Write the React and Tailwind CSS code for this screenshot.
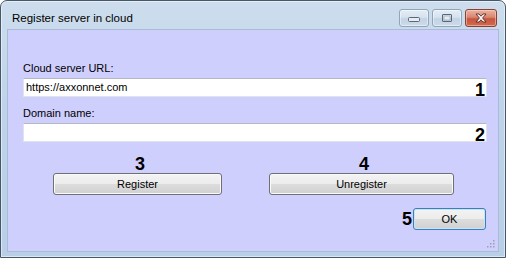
import React from "react";

function CaptionButton({ kind }) {
  if (kind === "close") {
    return (
      <div className="flex h-[18px] w-[32px] items-center justify-center rounded-[3px] border border-[#8a3f33] bg-[linear-gradient(to_bottom,#eab3a3_0%,#d98770_45%,#c8553d_55%,#cf6b4f_100%)] shadow-[inset_0_0_0_1px_rgba(255,220,210,0.5)]">
        <svg width="14" height="10" viewBox="0 0 14 10">
          <path
            d="M2 1 L5 1 L7 3.2 L9 1 L12 1 L8.6 5 L12 9 L9 9 L7 6.8 L5 9 L2 9 L5.4 5 Z"
            fill="#f4f4f4"
            stroke="#5b2a22"
            strokeWidth="0.9"
            strokeLinejoin="round"
          />
        </svg>
      </div>
    );
  }
  return (
    <div className="flex h-[18px] w-[30px] items-center justify-center rounded-[3px] border border-[#91a5ba] bg-[linear-gradient(to_bottom,#e4edf6_0%,#d6e2ee_45%,#c2d3e5_55%,#ccdbea_100%)] shadow-[inset_0_0_0_1px_rgba(255,255,255,0.45)]">
      {kind === "min" ? (
        <svg width="14" height="10" viewBox="0 0 14 10">
          <rect x="1.5" y="4.5" width="11" height="4" rx="1" fill="#e8ecf0" stroke="#56687a" />
        </svg>
      ) : (
        <svg width="14" height="10" viewBox="0 0 14 10">
          <rect x="2.5" y="1.5" width="9" height="7" rx="0.5" fill="none" stroke="#56687a" />
          <rect x="4" y="3" width="6" height="4" fill="#e8ecf0" stroke="#8a9bad" strokeWidth="0.6" />
        </svg>
      )}
    </div>
  );
}

function Field({ label, value, num, labelGap }) {
  return (
    <div className={`flex flex-col ${labelGap}`}>
      <span className="h-[13px] text-[11px] leading-[13px] text-black">{label}</span>
      <div className="relative mt-[3px] mr-[11px] flex h-[19px] items-center border border-[#dfe3ea] border-t-[#b4b8c0] bg-white px-[2px] text-[11px] leading-[13px] text-black">
        {value}
        <span className="absolute top-[3px] right-[1px] text-[18px] font-bold leading-[17px] text-black">
          {num}
        </span>
      </div>
    </div>
  );
}

function WinButton({ label, width, focused }) {
  return (
    <div
      className={`flex h-[22px] ${width} items-center justify-center rounded-[3px] border text-[11px] leading-[13px] text-black bg-[linear-gradient(to_bottom,#f3f3f3_0%,#ececec_50%,#dddddd_50%,#d0d0d0_100%)] ${
        focused
          ? "border-[#3c7fb1] shadow-[inset_0_0_0_1px_#c4e5f6]"
          : "border-[#707070] shadow-[inset_0_0_0_1px_#fafafa]"
      }`}
    >
      {label}
    </div>
  );
}

export default function App() {
  return (
    <div className="h-[258px] w-[506px] bg-white font-['Liberation_Sans',Arial,sans-serif]">
      <div className="flex h-full w-full flex-col overflow-hidden rounded-t-[7px] border border-[#46576a] bg-[linear-gradient(to_bottom,#cddded_0%,#bfd4ea_40%,#b8cfe7_100%)] shadow-[inset_0_0_0_1px_rgba(255,255,255,0.5)]">
        {/* Title bar */}
        <div className="flex h-[29px] shrink-0 items-start pr-[8px] pl-[11px]">
          <span className="pt-[10px] text-[11.5px] leading-[14px] text-black">
            Register server in cloud
          </span>
          <div className="ml-auto flex gap-[3px] pt-[8px]">
            <CaptionButton kind="min" />
            <CaptionButton kind="max" />
            <CaptionButton kind="close" />
          </div>
        </div>

        {/* Client area */}
        <div className="mx-[7px] mb-[6px] flex flex-1 flex-col bg-[#cfcffe] pl-[15px] shadow-[0_0_0_1px_#a8bdd4]">
          <Field label="Cloud server URL:" value="https://axxonnet.com" num="1" labelGap="mt-[32px]" />
          <Field label="Domain name:" value="" num="2" labelGap="mt-[10px]" />

          <div className="mt-[14px] flex gap-[47px] pl-[30px]">
            <div className="flex w-[169px] flex-col items-center">
              <span className="pl-[5px] text-[18px] font-bold leading-[17px] text-black">3</span>
              <WinButton label="Register" width="w-[169px]" />
            </div>
            <div className="flex w-[185px] flex-col items-center">
              <span className="pl-[5px] text-[18px] font-bold leading-[17px] text-black">4</span>
              <WinButton label="Unregister" width="w-[185px]" />
            </div>
          </div>

          <div className="mt-[13px] flex items-center justify-end gap-[1px] pr-[12px]">
            <span className="text-[18px] font-bold leading-[17px] text-black">5</span>
            <WinButton label="OK" width="w-[73px]" focused />
          </div>

          <div className="mt-auto flex justify-end pr-[3px] pb-[3px]">
            <svg width="8" height="8" viewBox="0 0 8 8">
              <rect x="6" y="0" width="1.5" height="1.5" fill="#9aa0ac" />
              <rect x="3" y="3" width="1.5" height="1.5" fill="#9aa0ac" />
              <rect x="6" y="3" width="1.5" height="1.5" fill="#9aa0ac" />
              <rect x="0" y="6" width="1.5" height="1.5" fill="#9aa0ac" />
              <rect x="3" y="6" width="1.5" height="1.5" fill="#9aa0ac" />
              <rect x="6" y="6" width="1.5" height="1.5" fill="#9aa0ac" />
            </svg>
          </div>
        </div>
      </div>
    </div>
  );
}
